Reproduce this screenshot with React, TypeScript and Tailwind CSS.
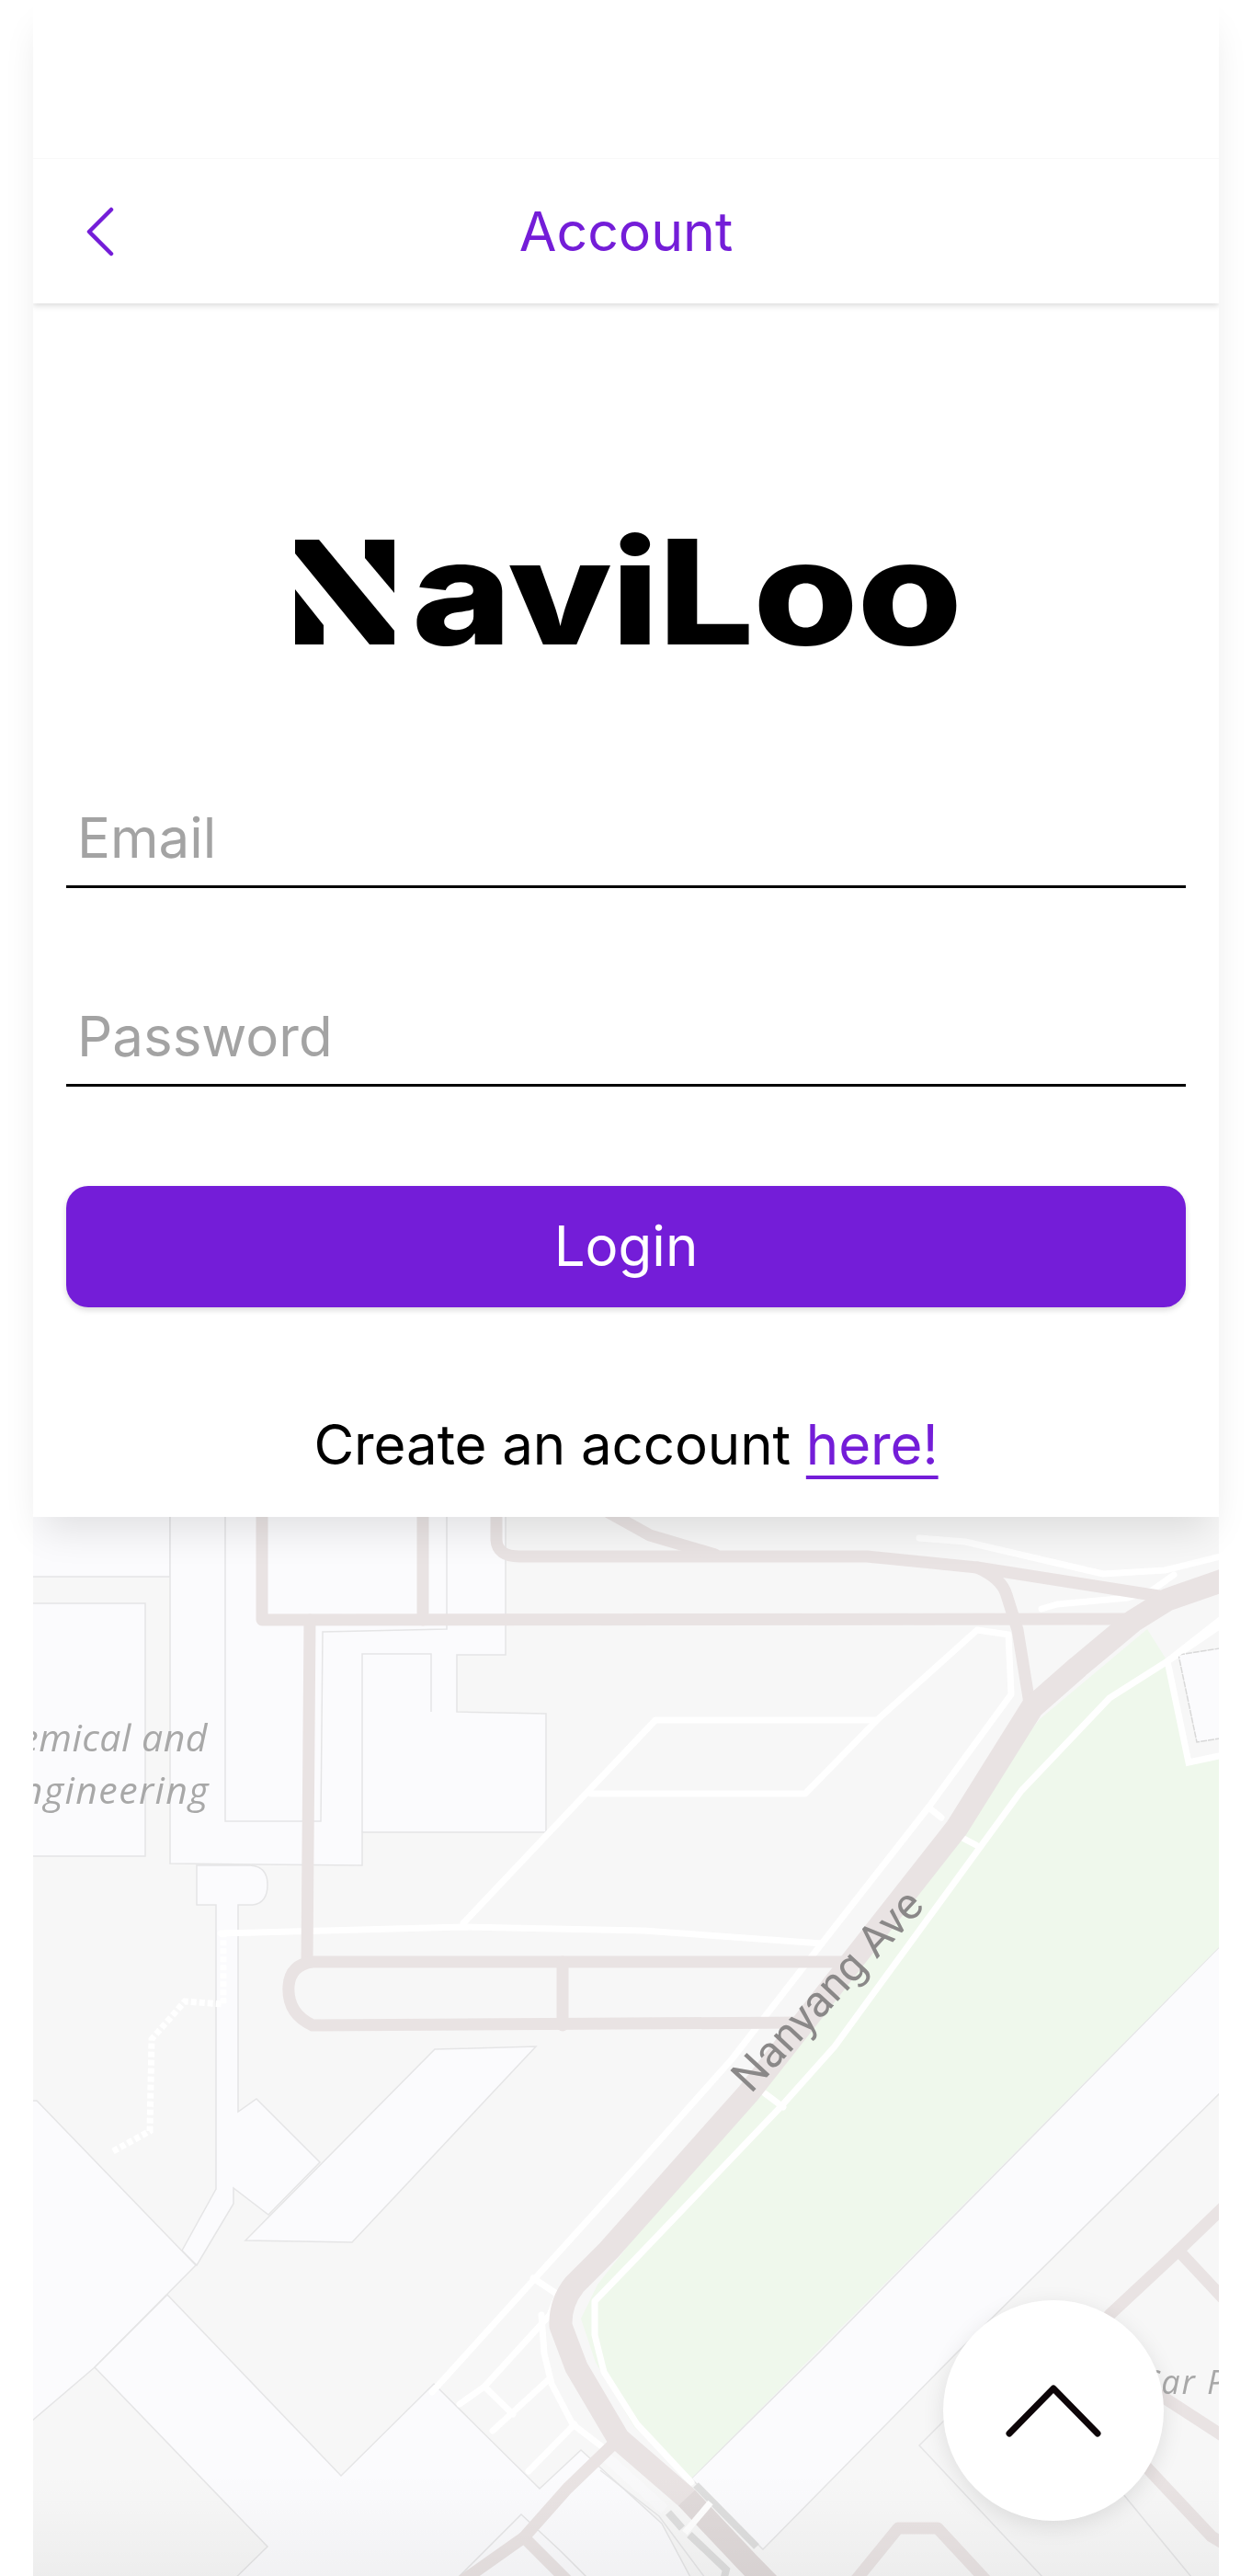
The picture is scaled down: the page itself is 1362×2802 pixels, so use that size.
const B = { fill: "#fbfbfd", stroke: "#e5e5e6", strokeWidth: 1.5 };

function MapArt() {
  const white = { fill: "none", stroke: "#ffffff", strokeLinecap: "round" as const, strokeLinejoin: "round" as const };
  const road = { fill: "none", stroke: "#e9e3e3", strokeLinecap: "round" as const, strokeLinejoin: "round" as const };
  return (
    <svg
      viewBox="26 1640 1310 1172"
      width="1310"
      height="1172"
      className="absolute left-[-10px] top-[-10px] block max-w-none blur-[0.7px]"
    >
      <rect x="20" y="1630" width="1320" height="1190" fill="#f7f7f7" />
      {/* buildings */}
      <polygon {...B} points="15,1630 185,1630 185,1715 15,1715" />
      <polygon {...B} points="15,1744 158,1744 158,2019 15,2019" />
      <polygon {...B} points="185,1630 550,1630 550,1800 497,1800 497,1862 594,1864 594,1993 394,1993 394,2029 185,2027" />
      <polyline fill="none" stroke="#e5e5e6" strokeWidth="1.5" points="245,1630 245,1981 349,1981 351,1775 486,1772 486,1630" />
      <polyline fill="none" stroke="#e5e5e6" strokeWidth="1.5" points="394,1993 394,1799 469,1799 469,1862" />
      <path {...B} d="M214 2029 L214 2072 L235 2072 L235 2381 L198 2448 L214 2464 L254 2397 L254 2380 L292 2409 L348 2352 L279 2283 L259 2297 L259 2072 L275 2072 Q291 2070 291 2050 Q291 2030 272 2029 Z" />
      <polygon {...B} points="473,2229 583,2226 383,2439 267,2437" />
      <polygon {...B} points="15,2285 40,2285 213,2464 103,2575 15,2650" />
      <polygon {...B} points="182,2496 371,2693 472,2593 587,2707 632,2665 720,2745 760,2820 240,2820 291,2770 103,2575" />
      <polygon {...B} points="1340,2104 890,2560 752,2696 830,2773 1040,2560 1340,2264" />
      <polygon fill="none" stroke="#e5e5e6" strokeWidth="1.5" points="1000,2660 1150,2820 1310,2820 1170,2650 1150,2520 1060,2600" />
      <polyline fill="none" stroke="#e5e5e6" strokeWidth="1.5" points="490,2812 567,2735 610,2775 650,2815" />
      {/* park */}
      <polygon fill="#eff8ec" points="1248,1772 1270,1807 1293,1917 1340,1907 1340,2104 752,2696 690,2640 648,2570 632,2522 650,2485 1131,1870" />
      <polygon fill="#f7f7f7" stroke="#ffffff" strokeWidth="7" points="1270,1807 1293,1917 1340,1907 1340,1760" />
      <polygon fill="#fbfbfd" stroke="#d8d8d8" strokeWidth="1.5" strokeDasharray="7 1" points="1282,1800 1340,1791 1340,1889 1302,1895" />
      {/* foot paths */}
      <g {...white} strokeWidth="7">
        <polyline points="1000,1673 1050,1677 1200,1712 1267,1708 1340,1690" />
        <polyline points="1133,1750 1150,1745 1227,1738 1253,1730 1277,1713" />
        <polyline points="1340,1752 1270,1807 1207,1847 1111,1948 908,2226 849,2292 700,2448 647,2503 647,2540 657,2580 693,2637 752,2700" />
        <polyline points="470,2602 700,2348 796,2240 894,2114 1010,1966 1100,1843 1097,1778 1063,1773 954,1871 713,1871 504,2092" />
        <polyline points="643,1951 876,1951 954,1871" />
        <polyline points="240,2103 504,2096 700,2100 894,2114" />
        <polyline points="1010,1966 1024,1977" />
        <polyline points="1041,1996 1062,2007" />
        <polyline points="832,2277 852,2292" />
        <polyline points="580,2478 607,2496" />
        <polyline points="500,2615 527,2596 598,2518 607,2496" />
        <polyline points="527,2596 558,2626" />
        <polyline points="536,2644 596,2589" />
        <polyline points="575,2688 625,2637" />
        <polyline points="589,2518 592,2560 600,2593 623,2637 657,2663" />
      </g>
      <polyline points="660,2673 723,2730" fill="none" stroke="#f9f9fa" strokeWidth="12" />
      <polyline points="653,2687 717,2737 773,2812" fill="none" stroke="#e5e5e6" strokeWidth="1.5" />
      <polyline points="123,2340 163,2318 165,2218 201,2177 243,2180 243,2103" fill="none" stroke="#ffffff" strokeWidth="7" strokeDasharray="6 3" />
      {/* roads */}
      <g {...road} strokeWidth="13">
        <path d="M285 1630 L285 1762 L1227 1761" />
        <path d="M460 1630 L460 1762" />
        <path d="M337 1762 L334 2134" />
        <path d="M916 2134 L340 2134 Q316 2137 314 2160 Q312 2190 340 2203 L872 2200" />
        <path d="M612 2134 L612 2203" />
        <path d="M540 1630 L540 1675 Q541 1693 565 1693 L943 1693 L1063 1705 L1267 1737" />
        <path d="M662 1645 L707 1670 L778 1691" />
        <path d="M1063 1705 Q1090 1717 1095 1735 L1107 1773 L1120 1853" />
        <path d="M1340 2392 L1282 2448 L1207 2518" />
        <path d="M1282 2448 L1340 2510" />
        <path d="M1260 2604 L1340 2656" />
        <path d="M1242 2678 L1318 2759 L1340 2772" />
        <path d="M920 2820 L977 2750 L1020 2750 L1085 2820" />
        <path d="M673 2653 L617 2707 L570 2760 L485 2820" />
        <path d="M570 2760 L630 2820" />
      </g>
      <g {...road} strokeWidth="25">
        <path d="M1345 1714 L1270 1740 L1233 1763 L1173 1813 L1123 1857 L1041 1988 L814 2277 L662 2448 L625 2485 Q609 2505 610 2530 L627 2575 L673 2653 L747 2717" />
      </g>
      <path d="M747 2717 L813 2787 L850 2825" fill="none" stroke="#e0dada" strokeWidth="25" />
      <polyline points="757,2703 823,2770" fill="none" stroke="#dedede" strokeWidth="8" />
      <polyline points="750,2757 790,2795 785,2815" fill="none" stroke="#dedede" strokeWidth="8" />
      <polyline points="727,2733 742,2750" fill="none" stroke="#dedede" strokeWidth="8" />
      <polyline points="745,2755 773,2722" fill="none" stroke="#ffffff" strokeWidth="7" />
      {/* labels */}
      <g fontFamily="'Open Sans', sans-serif" fontStyle="italic" fill="#a8a8a8">
        <text x="226" y="1905" textAnchor="end" fontSize="41" letterSpacing="0.5">Chemical and</text>
        <text x="228" y="1962" textAnchor="end" fontSize="41" letterSpacing="1.4">Engineering</text>
        <text x="1240" y="2604" fontSize="36" letterSpacing="2">Car Park</text>
      </g>
      <text
        x="901"
        y="2181"
        transform="rotate(-47 901 2166)"
        textAnchor="middle"
        fontFamily="Roboto, sans-serif"
        fontSize="48"
        fill="#8a8888"
      >
        Nanyang Ave
      </text>
    </svg>
  );
}

export default function App() {
  return (
    <div className="relative flex h-[2802px] w-full flex-col overflow-hidden bg-white px-[36px] font-['Inter',sans-serif]">
      <div className="relative z-10 flex h-[1650px] flex-col bg-white shadow-[0_24px_40px_-10px_rgba(0,0,0,0.11)]">
        <div className="h-[173px] border-b border-[#f8f8f8]" />
        <header className="relative flex h-[157px] items-center justify-center bg-white shadow-[0_3px_6px_rgba(0,0,0,0.13)] [clip-path:inset(0_0_-20px_0)]">
          <svg className="absolute left-[58px] top-[52px]" width="30" height="54" viewBox="0 0 30 54" fill="none">
            <path d="M27 3 L3 27 L27 51" stroke="#741dd8" strokeWidth="4.5" strokeLinecap="round" strokeLinejoin="round" />
          </svg>
          <span className="text-[59px] leading-[72px] text-[#741dd8]">Account</span>
        </header>
        <div className="flex h-[540px] items-start justify-center pt-[257px]">
          <div className="flex items-baseline">
            <svg width="108" height="114" viewBox="0 0 108 114" className="block">
              <polygon fill="#000" points="0,0 26,0 108,99 108,114 81,114 0,15" />
              <polygon fill="#000" points="76,0 108,0 108,58 76,20" />
              <polygon fill="#000" points="0,54 31,93 31,114 0,114" />
            </svg>
            <span className="ml-[19px] block w-[593px] origin-left scale-x-[1.17] text-[158px] font-extrabold leading-[110px] tracking-[-1px] text-black">
              aviLoo
            </span>
          </div>
        </div>
        <form className="flex flex-col px-[36px]">
          <input
            placeholder="Email"
            className="box-border h-[96px] w-full border-b-[3px] border-black pb-[12px] pl-[12px] text-[60px] leading-[72px] outline-none placeholder:text-[#a3a3a3]"
          />
          <input
            placeholder="Password"
            className="mt-[120px] box-border h-[96px] w-full border-b-[3px] border-black pb-[12px] pl-[12px] text-[60px] leading-[72px] outline-none placeholder:text-[#a3a3a3]"
          />
          <button
            type="button"
            className="mt-[108px] h-[132px] w-full rounded-[24px] bg-[#741dd8] pb-[2px] text-[60px] leading-[72px] text-white shadow-[0_3px_6px_rgba(0,0,0,0.15)]"
          >
            Login
          </button>
          <p className="mt-[113px] text-center text-[60px] leading-[72px] tracking-[-0.1px] text-black">
            Create an account{" "}
            <a className="text-[#741dd8] underline decoration-[4px] underline-offset-[12px]">here!</a>
          </p>
        </form>
      </div>
      <div className="relative flex-1 overflow-hidden">
        <MapArt />
        <div className="absolute inset-x-0 bottom-0 h-[110px] bg-gradient-to-t from-black/[0.04] to-transparent" />
      </div>
      <button
        type="button"
        className="absolute left-[1026px] top-[2502px] z-20 flex h-[240px] w-[240px] items-center justify-center rounded-full bg-white shadow-[0_6px_24px_rgba(0,0,0,0.1)]"
      >
        <svg width="104" height="60" viewBox="0 0 104 60" fill="none">
          <path d="M4 55 L52 6 L100 55" stroke="#0d0508" strokeWidth="7" strokeLinecap="round" strokeLinejoin="round" />
        </svg>
      </button>
    </div>
  );
}
